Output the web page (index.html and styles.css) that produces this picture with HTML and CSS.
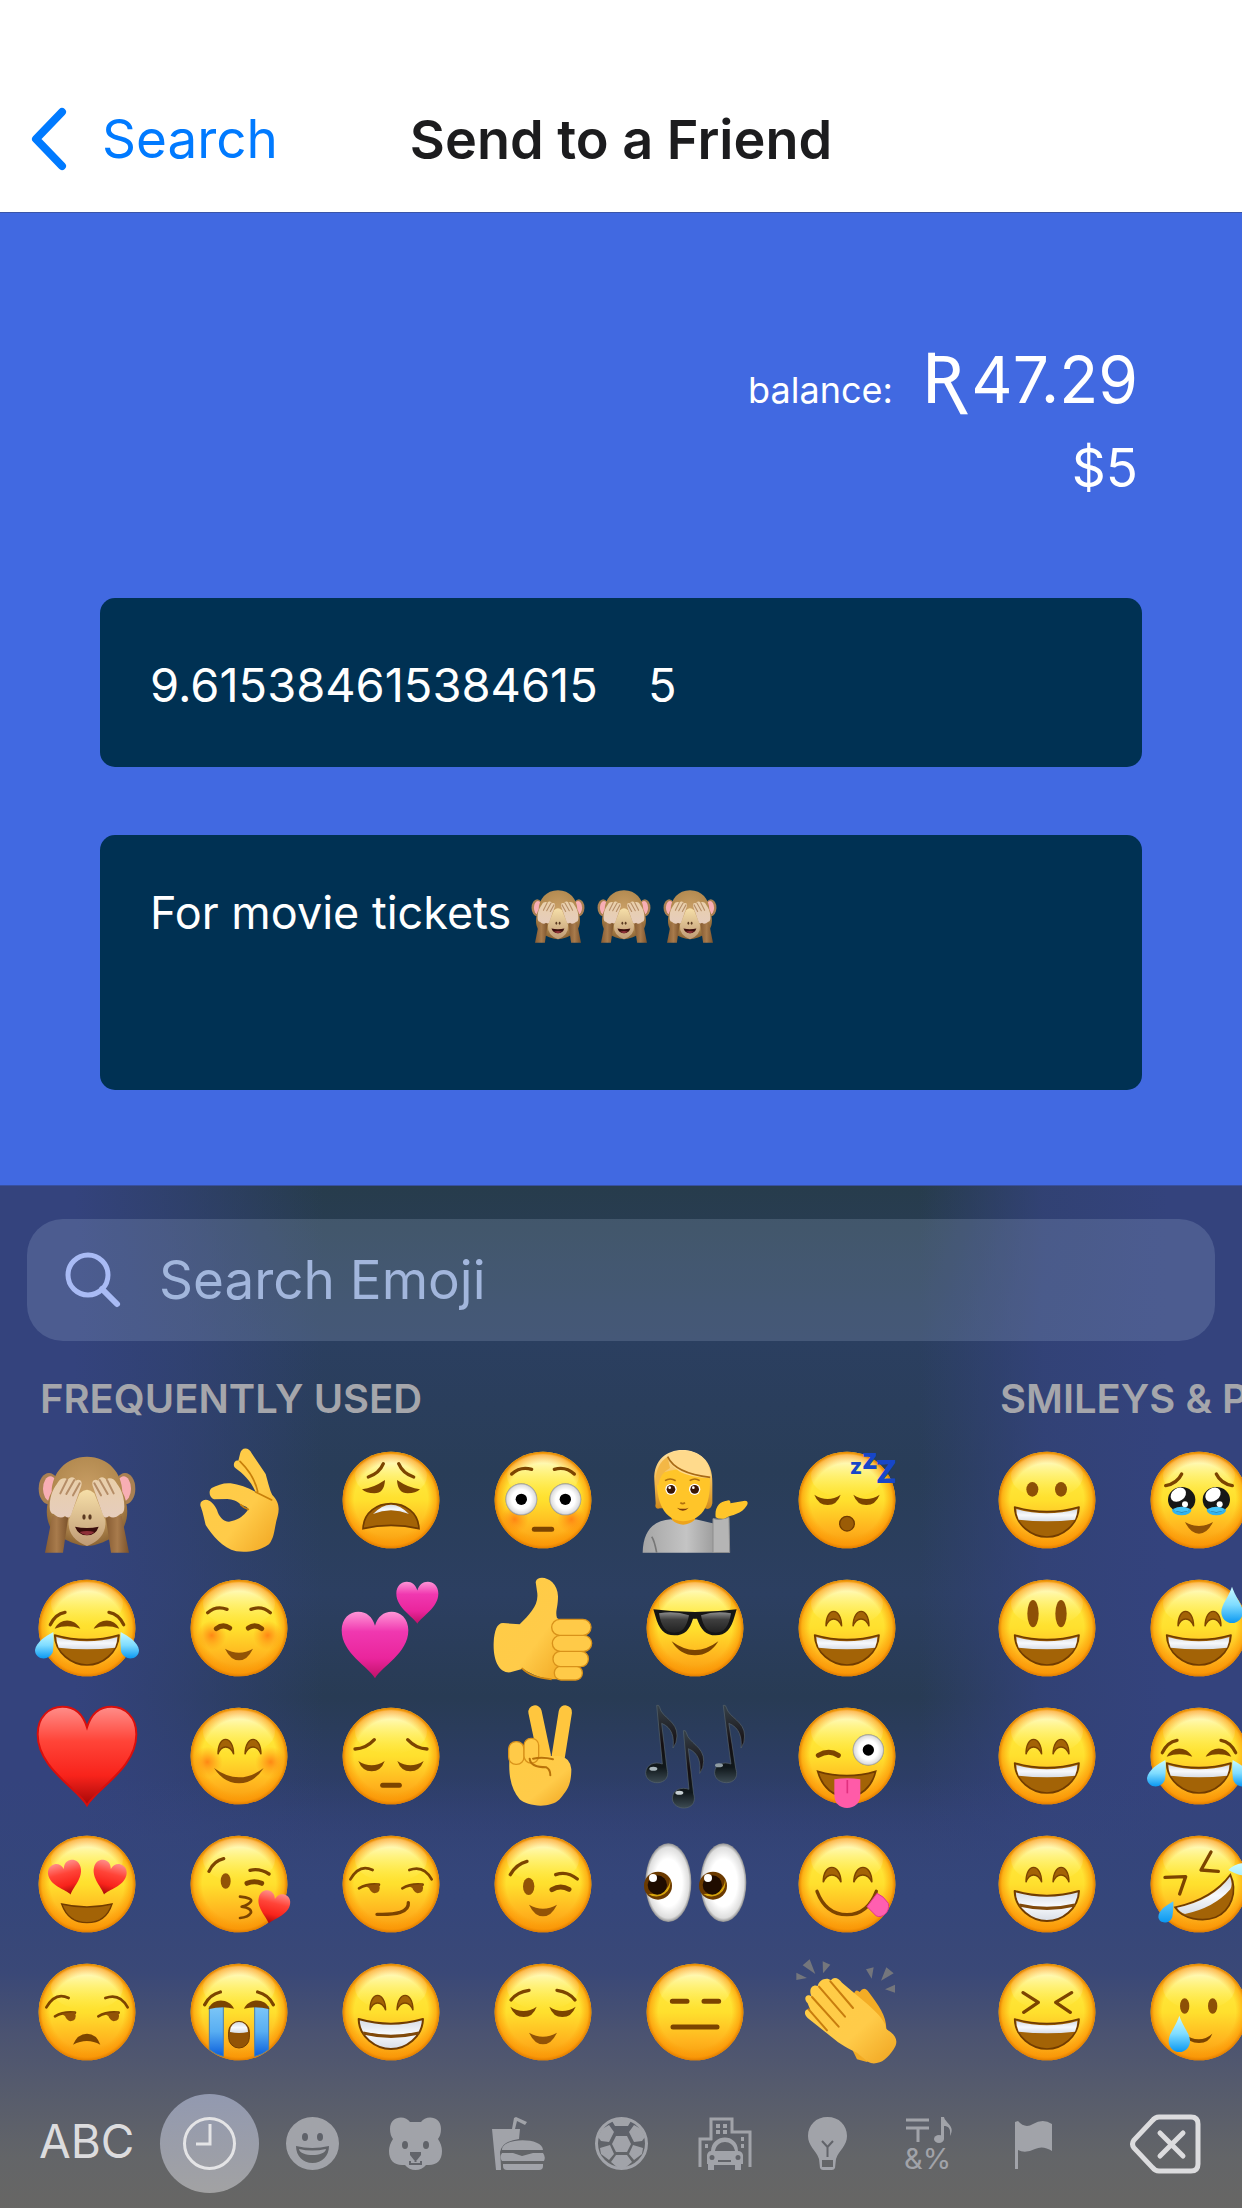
FILE: index.html
```html
<!DOCTYPE html>
<html lang="en">
<head>
<meta charset="utf-8">
<meta name="viewport" content="width=device-width, initial-scale=1">
<title>Send to a Friend</title>
<link rel="stylesheet" href="styles.css">
</head>
<body>
<svg class="sprite" width="0" height="0" aria-hidden="true">
  <defs>
    <linearGradient id="gFace" x1="0" y1="0" x2="0" y2="1">
      <stop offset="0" stop-color="#fff04a"/><stop offset=".5" stop-color="#ffe02e"/><stop offset=".8" stop-color="#ffb41e"/><stop offset="1" stop-color="#f79a0c"/>
    </linearGradient>
    <radialGradient id="gRim" cx=".5" cy=".5" r=".5">
      <stop offset=".76" stop-color="#ff9a00" stop-opacity="0"/><stop offset=".93" stop-color="#fb9404" stop-opacity=".6"/><stop offset="1" stop-color="#e07c00"/>
    </radialGradient>
    <linearGradient id="gShine" x1="0" y1="0" x2="0" y2="1">
      <stop offset="0" stop-color="#fffef0" stop-opacity=".95"/><stop offset="1" stop-color="#fff566" stop-opacity="0"/>
    </linearGradient>
    <radialGradient id="gCheek"><stop offset="0" stop-color="#ff7a10" stop-opacity=".85"/><stop offset="1" stop-color="#ff9010" stop-opacity="0"/></radialGradient>
    <linearGradient id="gTeeth" x1="0" y1="0" x2="0" y2="1"><stop offset="0" stop-color="#d5dae3"/><stop offset=".5" stop-color="#f7f9fc"/><stop offset="1" stop-color="#d8dde6"/></linearGradient>
    <linearGradient id="gTear" x1="0" y1="0" x2="0" y2="1"><stop offset="0" stop-color="#c9fbff"/><stop offset=".5" stop-color="#7fdcff"/><stop offset="1" stop-color="#0a98f2"/></linearGradient>
    <linearGradient id="gStream" x1="0" y1="0" x2="0" y2="1"><stop offset="0" stop-color="#7cc6f7"/><stop offset=".5" stop-color="#58aef2"/><stop offset="1" stop-color="#0b5fdc"/></linearGradient>
    <linearGradient id="gRed" x1="0" y1="0" x2="0" y2="1"><stop offset="0" stop-color="#ff8e8a"/><stop offset=".35" stop-color="#ff4438"/><stop offset=".7" stop-color="#f8231b"/><stop offset="1" stop-color="#a50808"/></linearGradient>
    <linearGradient id="gPink" x1="0" y1="0" x2="0" y2="1"><stop offset="0" stop-color="#ff96d6"/><stop offset=".3" stop-color="#f038b0"/><stop offset=".7" stop-color="#ea259c"/><stop offset="1" stop-color="#c01268"/></linearGradient>
    <linearGradient id="gHand" x1="0" y1="0" x2="1" y2="1"><stop offset="0" stop-color="#ffcc45"/><stop offset=".6" stop-color="#ffcb49"/><stop offset="1" stop-color="#f0a420"/></linearGradient>
    <radialGradient id="gEye"><stop offset=".6" stop-color="#ffffff"/><stop offset=".9" stop-color="#dedede"/><stop offset="1" stop-color="#8f8f8f"/></radialGradient>
    <radialGradient id="gFur" cx=".5" cy=".4" r=".6"><stop offset="0" stop-color="#caa067"/><stop offset=".7" stop-color="#b38a50"/><stop offset="1" stop-color="#8c6434"/></radialGradient>
    <linearGradient id="gArm" x1="0" y1="0" x2="1" y2="0"><stop offset="0" stop-color="#865b32"/><stop offset=".5" stop-color="#a87b4c"/><stop offset="1" stop-color="#7b522b"/></linearGradient>
    <linearGradient id="gMuzzle" x1="0" y1="0" x2="0" y2="1"><stop offset="0" stop-color="#f6dfa8"/><stop offset="1" stop-color="#bf9a75"/></linearGradient>
    <linearGradient id="gPaw" x1="0" y1="0" x2="0" y2="1"><stop offset="0" stop-color="#e9cfa9"/><stop offset="1" stop-color="#e6cdbd"/></linearGradient>
    <linearGradient id="gShirt" x1="0" y1="0" x2="1" y2="0"><stop offset="0" stop-color="#a5a5a5"/><stop offset=".6" stop-color="#c4c4c4"/><stop offset="1" stop-color="#9b9b9b"/></linearGradient>
    <linearGradient id="gHair" x1="0" y1="0" x2="0" y2="1"><stop offset="0" stop-color="#ffe2a3"/><stop offset=".5" stop-color="#f4bd55"/><stop offset="1" stop-color="#d08a1c"/></linearGradient>
    <linearGradient id="gNote" x1="0" y1="0" x2="0" y2="1"><stop offset="0" stop-color="#37424a"/><stop offset=".5" stop-color="#150f12"/><stop offset=".8" stop-color="#10181c"/><stop offset="1" stop-color="#3d4b53"/></linearGradient>
    <linearGradient id="gLens" x1="0" y1="0" x2="0" y2="1"><stop offset="0" stop-color="#8b8b8b"/><stop offset=".35" stop-color="#3f3f3f"/><stop offset="1" stop-color="#222"/></linearGradient>

    <g id="face">
      <circle r="145" fill="url(#gFace)"/><ellipse cy="-72" rx="108" ry="66" fill="url(#gShine)"/><circle r="145" fill="url(#gRim)"/>
    </g>
    <g id="happyEyes" fill="#a36306" stroke="#7c4400" stroke-width="4">
      <path d="M-63-5C-64-65-17-65-16-5Q-24-27-40-27T-63-5Z"/><path d="M18-5C19-65 66-65 66-5Q58-27 42-27T18-5Z"/>
    </g>
    <g id="openMouth">
      <path d="M-97 21Q0 49 96 21C94 75 45 111 0 111S-96 75-97 21Z" fill="#a36306" stroke="#713c00" stroke-width="5" stroke-linejoin="round"/>
      <path d="M-92 27Q0 53 91 27Q91 44 84 59Q0 69-85 59Q-92 44-92 27Z" fill="url(#gTeeth)"/>
    </g>
    <g id="teethMouth">
      <path d="M-97 21Q0 49 96 21C94 75 45 111 0 111S-96 75-97 21Z" fill="url(#gTeeth)" stroke="#713c00" stroke-width="6" stroke-linejoin="round"/>
      <path d="M-84 63Q0 83 84 63" fill="none" stroke="#80490a" stroke-width="10"/>
    </g>
    <g id="closedEyes" fill="#7c4400"><path d="M-98-16Q-58 10-19-16Q-30 15-58 15T-98-16Z"/><path d="M19-16Q58 10 98-16Q86 15 58 15T19-16Z"/></g>
    <path id="smallSmile" d="M-42 62Q0 86 42 62Q25 97 0 97T-42 62Z" fill="#925306"/>
    <path id="heart" d="M0 100C-20 65-100 25-100-44C-100-80-76-100-50-100C-25-100-8-85 0-58C8-85 25-100 50-100C76-100 100-80 100-44C100 25 20 65 0 100Z"/>
    <path id="drop" d="M0-55C12-20 32-2 32 22A32 32 0 0 1-32 22C-32-2-12-20 0-55Z" fill="url(#gTear)"/>
    <g id="sideEyes"><g class="ink thin"><path d="M-122-14Q-95-62-55-42M55-42Q98-58 122-14M-96 13Q-70-2-36 2M34 13Q60-2 95 2"/></g><g fill="#925306"><path d="M-78 5L-36 0Q-28 26-50 28Q-62 24-66 12Z"/><path d="M52 5L94 0Q102 26 80 28Q68 24 64 12Z"/></g></g>
  </defs>

  <symbol id="monkey" viewBox="-159 -159 318 318">
    <ellipse cx="-114" cy="-34" rx="31" ry="47" fill="#a98052"/><ellipse cx="114" cy="-34" rx="31" ry="47" fill="#a98052"/>
    <ellipse cx="-110" cy="-34" rx="22" ry="37" fill="#f8aeb4"/><ellipse cx="110" cy="-34" rx="22" ry="37" fill="#f8aeb4"/>
    <path d="M0-130C65-130 105-80 106-25C130 20 128 90 75 115C50 125 30 138 0 138S-50 125-75 115C-128 90-130 20-106-25C-105-80-65-130 0-130Z" fill="url(#gFur)"/>
    <path d="M-22-20Q0-42 22-20L55 60Q60 115 0 138Q-60 115-55 60Z" fill="url(#gMuzzle)"/>
    <ellipse cx="-9" cy="51" rx="5" ry="8" fill="#5b3a22"/><ellipse cx="9" cy="51" rx="5" ry="8" fill="#5b3a22"/>
    <path d="M-36 80Q0 88 35 80Q26 106 0 106T-36 80Z" fill="#3a0d0c"/><path d="M-22 96Q0 90 22 96Q12 106 0 106T-22 96Z" fill="#8e3038"/>
    <path d="M-104 48L-56 50L-72 158H-126Z" fill="url(#gArm)"/><path d="M104 48L56 50L72 158H126Z" fill="url(#gArm)"/>
    <g id="paw"><path d="M-112 20C-112-20-96-40-88-52C-80-68-62-68-58-60C-50-74-34-68-34-58C-20-66-12-54-18-40L-46 40Q-52 60-66 48Q-80 60-100 42Q-112 40-112 20Z" fill="url(#gPaw)"/><path d="M-80-20L-60-60M-62-18L-38-60M-42-14L-22-50" fill="none" stroke="#b58d67" stroke-width="6" stroke-linecap="round"/></g>
    <use href="#paw" transform="scale(-1 1)"/>
  </symbol>
  <symbol id="okhand" viewBox="-159 -159 318 318">
    <path d="M3-138C6-160 30-160 38-140L80-78C88-50 92-30 100-15C120 5 122 25 116 48C106 80 108 110 90 133C60 155 20 158-8 154C-50 145-80 105-100 75C-106 50-108 40-114 22C-120 8-112 0-100-1C-85 0-72 15-66 30C-60 50-48 65-30 65C-5 60 10 50 20 38C35 25 25 20 5 14C-5 2-20-2-35-3L-75-2C-90-8-92-28-82-36C-65-45-45-52-25-50C0-46 25-38 50-24C34-60 10-80-10-95C-22-105-12-122-2-118Z" fill="url(#gHand)"/>
    <path d="M3-116Q45-75 56-26M28 28Q15 25 5 14M50-24L98 0" fill="none" stroke="#c87f0a" stroke-width="5" stroke-linecap="round"/>
  </symbol>
  <symbol id="weary" viewBox="-159 -159 318 318"><use href="#face"/>
    <path class="ink" d="M-68-69Q-35-80-23-109M68-69Q35-80 23-109"/>
    <g fill="#7c4400"><path d="M-87-32Q-55-35-18-60Q-20-20-50-20Q-75-20-87-32Z"/><path d="M87-32Q55-35 18-60Q20-20 50-20Q75-20 87-32Z"/></g>
    <path d="M-84 86C-80-14 80-14 84 86Q0 66-84 86Z" fill="#a36306" stroke="#713c00" stroke-width="5"/><path d="M-54 42Q0-14 54 42Q0 20-54 42Z" fill="url(#gTeeth)"/>
  </symbol>
  <symbol id="flushed" viewBox="-159 -159 318 318"><use href="#face"/>
    <circle cx="-85" cy="58" r="42" fill="url(#gCheek)"/><circle cx="85" cy="58" r="42" fill="url(#gCheek)"/>
    <circle cx="-65" cy="-2" r="48" fill="url(#gEye)"/><circle cx="67" cy="-2" r="48" fill="url(#gEye)"/><circle cx="-65" cy="-2" r="17"/><circle cx="67" cy="-2" r="17"/>
    <path class="ink" d="M-94-78Q-68-102-34-92M94-78Q68-102 34-92"/><path class="ink fat" d="M-26 88H26"/>
  </symbol>
  <symbol id="tipping" viewBox="-159 -159 318 318">
    <path d="M-122-60C-125-120-85-150-38-150S55-120 52-50V10Q48 32 30 25H-105Q-122 30-118 10Z" fill="url(#gHair)"/>
    <path d="M-70 30H0V66Q-35 90-70 66Z" fill="#eda41c"/>
    <path d="M-157 158C-155 90-125 62-72 58Q-36 90 2 58L62 72V158Z" fill="url(#gShirt)"/>
    <path d="M-115 158Q-122 120-130 110" stroke="#777" stroke-width="5" fill="none"/>
    <path d="M54 56Q78 62 102 52L104 158H54Z" fill="#b5b5b5" stroke="#8d8d8d" stroke-width="3"/>
    <path d="M62 52C58 20 75 4 95 2Q108-2 106 10L150 2Q162 2 156 16C140 44 110 44 92 54Q76 60 62 52Z" fill="#ffc52a"/>
    <path d="M-114-75Q-38-110 44-75C47-20 44 60-36 64C-106 60-118-20-114-75Z" fill="#ffc529"/>
    <path d="M-80-135Q-75-70 48-65Q45-135-20-148Q-65-152-80-135Z" fill="#ffda8c"/><path d="M-82-130Q-118-110-120-45L-110-45Q-105-80-75-96Z" fill="#f3b746"/><path d="M-82-130Q-60-80 46-68" fill="none" stroke="#a86a16" stroke-width="5"/>
    <circle cx="-72" cy="-32" r="17" fill="#fff"/><circle cx="-1" cy="-32" r="17" fill="#fff"/><circle cx="-72" cy="-32" r="13" fill="#3b1605"/><circle cx="-1" cy="-32" r="13" fill="#3b1605"/><circle cx="-76" cy="-37" r="4" fill="#fff"/><circle cx="-5" cy="-37" r="4" fill="#fff"/>
    <path d="M-90-58Q-75-68-58-58M-16-58Q0-68 14-58M-44 8Q-37 14-30 8" fill="none" stroke="#b0700e" stroke-width="5"/><path d="M-54 23Q-36 30-19 23Q-36 42-54 23Z" fill="#7c3a0c"/>
  </symbol>
  <symbol id="joy" viewBox="-159 -159 318 318"><use href="#face"/><use href="#openMouth"/>
    <path class="ink" d="M-110-10Q-95-42-66-47M110-10Q95-42 66-47"/>
    <g fill="#7c4400"><path d="M-97 2C-80-32-38-30-20 2Q-58-12-97 2Z"/><path d="M97 2C80-32 38-30 20 2Q58-12 97 2Z"/></g>
    <path id="tearSide" d="M-101 12C-125 25-152 42-156 66C-156 98-110 100-102 70Q-98 40-101 12Z" fill="url(#gTear)"/><use href="#tearSide" transform="scale(-1 1)"/>
  </symbol>
  <symbol id="relaxed" viewBox="-159 -159 318 318"><use href="#face"/>
    <circle cx="-82" cy="22" r="44" fill="url(#gCheek)"/><circle cx="86" cy="22" r="44" fill="url(#gCheek)"/>
    <path class="ink" d="M-94-46Q-68-68-36-56M94-46Q68-68 36-56"/><path class="ink fat" d="M-68 2Q-48-14-28 0M68 2Q48-14 28 0"/><use href="#smallSmile"/>
  </symbol>
  <symbol id="hearts" viewBox="-159 -159 318 318"><use href="#heart" transform="translate(-48 51)" fill="url(#gPink)"/><use href="#heart" transform="translate(79 -76) scale(.63)" fill="url(#gPink)"/></symbol>
  <symbol id="thumb" viewBox="-159 -159 318 318">
    <path d="M-22-138C-16-164 44-150 45-95C45-60 36-50 42-30L80-10V150C30 160-20 150-60 122L-98 133C-130 136-150 100-148 45C-146 8-138-15-120-15L-70-11C-40-42-10-70-18-110Z" fill="url(#gHand)"/>
    <g fill="#ffca48" stroke="#d9921a" stroke-width="4"><rect x="34" y="114" width="84" height="42" rx="20"/><rect x="30" y="70" width="106" height="46" rx="22"/><rect x="28" y="22" width="118" height="48" rx="24"/><rect x="26" y="-26" width="118" height="48" rx="24"/></g>
    <path d="M-64 120Q-36 150 26 154" fill="none" stroke="#d28912" stroke-width="5"/>
  </symbol>
  <symbol id="shades" viewBox="-159 -159 318 318"><use href="#face"/>
    <path d="M-125-56Q0-40 125-56L119-36C108 5 92 22 62 22C32 22 18 5 6-28H-6C-16 5-30 22-62 22C-92 22-108 5-119-36Z" fill="#151515"/>
    <path d="M-108-44Q-60-52-18-38C-25 0-40 14-62 14C-88 14-102-5-108-44ZM108-44Q60-52 18-38C25 0 40 14 62 14C88 14 102-5 108-44Z" fill="url(#gLens)"/>
    <path d="M-70 40Q0 92 70 40Q45 82 0 82T-70 40Z" fill="#7c4400"/>
  </symbol>
  <symbol id="smile" viewBox="-159 -159 318 318"><use href="#face"/><use href="#happyEyes"/><use href="#openMouth"/></symbol>
  <symbol id="redheart" viewBox="-159 -159 318 318"><use href="#heart" transform="scale(1.48)" fill="url(#gRed)" stroke="#d90f0c" stroke-width="4"/></symbol>
  <symbol id="blush" viewBox="-159 -159 318 318"><use href="#face"/>
    <circle cx="-95" cy="18" r="46" fill="url(#gCheek)"/><circle cx="95" cy="18" r="46" fill="url(#gCheek)"/><use href="#happyEyes"/>
    <path d="M-75 36Q0 92 74 36Q45 82 0 82T-75 36Z" fill="#8a4d04"/>
  </symbol>
  <symbol id="pensive" viewBox="-159 -159 318 318"><use href="#face"/><path class="ink" d="M-108-21Q-75-22-50-49M108-21Q75-22 50-49"/><use href="#closedEyes" y="31"/><path class="ink fat" d="M-25 88H25"/></symbol>
  <symbol id="victory" viewBox="-159 -159 318 318">
    <path d="M-24-132L4 0M67-132L46 0" stroke="#ffc63e" stroke-width="40" stroke-linecap="round"/>
    <path d="M-100 0C-105 60-95 100-70 130C-50 150 20 160 50 130C70 105 85 90 85 40Q82 5 50 0Z" fill="url(#gHand)"/>
    <rect x="-103" y="-43" width="46" height="68" rx="22" fill="#ffca48" stroke="#d9921a" stroke-width="4"/><rect x="-57" y="-53" width="44" height="74" rx="21" fill="#ffca48" stroke="#d9921a" stroke-width="4"/>
    <path d="M-40 8Q-38 34 10 34Q22 40 22 58M30 10Q0 2-30 8" fill="none" stroke="#b9720a" stroke-width="6" stroke-linecap="round"/>
  </symbol>
  <symbol id="notes" viewBox="-159 -159 318 318">
    <g fill="url(#gNote)" stroke="#56636b" stroke-width="2">
      <g id="note"><path d="M-115-152Q-108-155-106-146C-100-115-52-105-54-60Q-54-40-66-24C-62-55-68-85-100-98L-84 38C-68 92-148 92-148 50C-146 24-120 16-98 24Z"/></g>
      <use href="#note" transform="translate(80 76)"/><use href="#note" transform="translate(205 0) skewX(2)"/>
    </g>
    <ellipse cx="-125" cy="38" rx="12" ry="6" fill="#a7b4ba"/><ellipse cx="-47" cy="110" rx="12" ry="6" fill="#c5ced2"/><ellipse cx="72" cy="28" rx="12" ry="6" fill="#8e9ba2"/>
  </symbol>
  <symbol id="tongue" viewBox="-159 -159 318 318"><use href="#face"/>
    <path class="ink fat" d="M-86-2Q-54-20-26-2"/><circle cx="64" cy="-18" r="47" fill="url(#gEye)"/><circle cx="64" cy="-18" r="17"/>
    <path d="M-88 46Q0 72 86 46C74 96 40 122 0 122S-74 96-88 46Z" fill="#a36306" stroke="#713c00" stroke-width="5"/>
    <path d="M-38 70Q0 64 40 70V118C40 142 22 156 0 156S-38 142-38 118Z" fill="#ff5ba8"/><path d="M1 72V112" stroke="#e0307f" stroke-width="5"/>
  </symbol>
  <symbol id="hearteyes" viewBox="-159 -159 318 318"><use href="#face"/>
    <use href="#heart" transform="translate(-62 -17) rotate(-15) scale(.5)" fill="url(#gRed)"/><use href="#heart" transform="translate(64 -17) rotate(15) scale(.5)" fill="url(#gRed)"/>
    <path d="M-76 60Q0 78 75 60C62 100 32 116 0 116S-62 100-76 60Z" fill="#a36306" stroke="#713c00" stroke-width="4"/>
  </symbol>
  <symbol id="kiss" viewBox="-159 -159 318 318"><use href="#face"/>
    <ellipse cx="-40" cy="-9" rx="15" ry="23" fill="#925306"/><path class="ink" d="M-90-38Q-75-70-46-76M33-41Q62-48 90-30"/><path class="ink fat" d="M24-2Q46-12 68-2"/>
    <path class="ink thin" d="M3 38Q40 42 36 52Q30 62 8 68Q38 72 36 86Q28 100 3 102"/>
    <use href="#heart" transform="translate(101 72) rotate(14) scale(.48)" fill="url(#gRed)"/>
  </symbol>
  <symbol id="smirk" viewBox="-159 -159 318 318"><use href="#face"/><use href="#sideEyes"/><path class="ink" d="M-42 91C15 93 55 85 52 56"/></symbol>
  <symbol id="wink" viewBox="-159 -159 318 318"><use href="#face"/>
    <ellipse cx="-43" cy="7" rx="17" ry="26" fill="#925306"/><path class="ink" d="M-98-28Q-80-60-48-68M38-28Q72-40 103-15"/><path class="ink fat" d="M27 17Q52 2 78 16"/><use href="#smallSmile"/>
  </symbol>
  <symbol id="eyes" viewBox="-159 -159 318 318">
    <g id="oneEye"><ellipse cx="-80" cy="-4" rx="69" ry="118" fill="url(#gEye)"/><circle cx="-111" cy="5" r="42" fill="#6b3a00"/><path d="M-140 30A42 42 0 0 0-75-15Q-75 30-140 30Z" fill="#d6a40c"/><circle cx="-113" cy="3" r="29" fill="#1f0c00"/><circle cx="-126" cy="-18" r="12" fill="#fff"/></g>
    <use href="#oneEye" x="165"/>
  </symbol>
  <symbol id="yum" viewBox="-159 -159 318 318"><use href="#face"/><use href="#happyEyes" transform="scale(1.13 1)"/>
    <path class="ink" d="M-90 22C-72 70-40 92 0 92S70 70 88 22"/><path d="M60 68L90 28Q110 36 124 58C130 84 106 104 88 96Z" fill="#ff5fb0" stroke="#e0388c" stroke-width="3"/>
  </symbol>
  <symbol id="unamused" viewBox="-159 -159 318 318"><use href="#face"/><use href="#sideEyes"/><path d="M-42 98Q-28 65 0 65T40 98Q0 76-42 98Z" fill="#7c4400"/></symbol>
  <symbol id="sob" viewBox="-159 -159 318 318"><use href="#face"/>
    <path d="M-89-16H-47V133Q-70 128-89 112ZM89-16H47V133Q70 128 89 112Z" fill="url(#gStream)" stroke="#4a7fae" stroke-width="3"/>
    <g fill="#7c4400"><path d="M-92-8C-78-46-28-40-15-10Q-50-20-92-8Z"/><path d="M92-8C78-46 28-40 15-10Q50-20 92-8Z"/></g><path class="ink" d="M-103-22Q-88-52-56-60M103-22Q88-52 56-60"/>
    <rect x="-31" y="28" width="62" height="80" rx="31" fill="#925306" stroke="#713c00" stroke-width="3"/><path d="M-27 60C-27 20 27 20 27 60Q0 66-27 60Z" fill="url(#gTeeth)"/>
  </symbol>
  <symbol id="beam" viewBox="-159 -159 318 318"><use href="#face"/><use href="#happyEyes"/><use href="#teethMouth"/></symbol>
  <symbol id="relieved" viewBox="-159 -159 318 318"><use href="#face"/><path class="ink" d="M-96-36Q-78-60-42-65M96-36Q78-60 42-65"/><use href="#closedEyes"/><use href="#smallSmile"/></symbol>
  <symbol id="blank" viewBox="-159 -159 318 318"><use href="#face"/><path class="ink fat" d="M-68-32H-24M27-32H71M-66 45H66"/></symbol>
  <symbol id="clap" viewBox="-159 -159 318 318">
    <g fill="#74767c"><path d="M-133-140L-112-158L-95-114ZM-73-152L-50-142L-72-116ZM-152-118L-120-102L-152-96ZM57-128L80-134L74-100ZM118-134L140-116L102-94ZM114-68L144-82V-58Z"/></g>
    <path d="M20-52Q26-72 38-60Q50-78 62-64C95-20 118 10 118 50L146 84L60 150L30 142L-20 40Z" fill="#f3ac25"/>
    <path d="M-48-95C-38-108-25-100-15-88L60-25C100 10 115 30 118 52C150 70 155 90 140 112C120 140 105 156 75 154C60 150 50 138 30 122C0 108-15 100-35 84L-118 18C-135 2-122-14-110-6L-118-26C-134-42-120-58-106-46C-118-72-100-84-88-78C-84-98-60-106-48-95Z" fill="url(#gHand)"/>
    <path d="M-50-92L18-12M-84-76L-6 14M-105-45L-25 44M-115-8L-60 55" fill="none" stroke="#c87d0e" stroke-width="6" stroke-linecap="round"/>
  </symbol>
  <symbol id="grin" viewBox="-159 -159 318 318"><use href="#face"/><ellipse cx="-44" cy="-32" rx="18" ry="22" fill="#8d5006"/><ellipse cx="42" cy="-32" rx="18" ry="22" fill="#8d5006"/><use href="#openMouth"/></symbol>
  <symbol id="holdtears" viewBox="-159 -159 318 318"><use href="#face"/>
    <ellipse cx="-52" cy="30" rx="29" ry="16" fill="#2fb3f2"/><ellipse cx="52" cy="30" rx="29" ry="16" fill="#2fb3f2"/><ellipse cx="-52" cy="-1" rx="41" ry="38" fill="#171717"/><ellipse cx="52" cy="-1" rx="41" ry="38" fill="#171717"/>
    <path d="M-78 27Q-52 14-26 27Q-30 36-52 36T-78 27ZM78 27Q52 14 26 27Q30 36 52 36T78 27Z" fill="#45c3f8"/>
    <ellipse cx="-62" cy="-16" rx="25" ry="19" transform="rotate(-35 -62 -16)" fill="#fff"/><ellipse cx="42" cy="-16" rx="25" ry="19" transform="rotate(-35 42 -16)" fill="#fff"/><circle cx="-42" cy="13" r="9" fill="#fff"/><circle cx="62" cy="13" r="9" fill="#fff"/>
    <path class="ink" d="M-100-43Q-65-50-52-78M100-43Q65-50 52-78"/><use href="#smallSmile" y="4"/>
  </symbol>
  <symbol id="smiley" viewBox="-159 -159 318 318"><use href="#face"/><ellipse cx="-42" cy="-43" rx="17" ry="41" fill="#8d5006"/><ellipse cx="42" cy="-43" rx="17" ry="41" fill="#8d5006"/><use href="#openMouth"/></symbol>
  <symbol id="sweat" viewBox="-159 -159 318 318"><use href="#face"/><use href="#happyEyes"/><use href="#openMouth"/><use href="#drop" x="99" y="-69"/></symbol>
  <symbol id="rofl" viewBox="-159 -159 318 318"><use href="#face"/>
    <path d="M-72 70Q40 45 94-28C118 25 95 80 50 100C10 115-50 105-72 70Z" fill="#a36306" stroke="#713c00" stroke-width="5"/><path d="M-66 71Q42 48 93-22Q102 0 94 16Q45 72-42 90Q-58 84-66 71Z" fill="url(#gTeeth)"/>
    <path class="ink" d="M-102-20L-40-22L-58 30M36-96L6-42L58-38"/>
    <path d="M-77 52C-100 65-122 80-122 100C-118 122-86 120-80 98Q-76 76-77 52ZM88-42C105-60 140-72 158-52C160-20 130-18 88-42Z" fill="url(#gTear)"/>
  </symbol>
  <symbol id="laugh" viewBox="-159 -159 318 318"><use href="#face"/><path class="ink" d="M-72-58L-26-29L-70 1M74-58L26-29L70 1"/><use href="#openMouth"/></symbol>
  <symbol id="tearsmile" viewBox="-159 -159 318 318"><use href="#face"/><ellipse cx="-43" cy="-18" rx="14" ry="23" fill="#8d5006"/><ellipse cx="41" cy="-18" rx="14" ry="23" fill="#8d5006"/>
    <path d="M-50 62Q0 100 40 65Q30 93 0 93T-50 62Z" fill="#7c4400"/><use href="#drop" x="-59" y="66"/></symbol>
</svg>

<header class="navbar">
  <a class="back" href="#search">
    <svg class="chevron" viewBox="0 0 38 64" aria-hidden="true"><path d="M32 5L6 32L32 59" fill="none" stroke="currentColor" stroke-width="8" stroke-linecap="round" stroke-linejoin="round"/></svg>
    <span>Search</span>
  </a>
  <h1 class="title">Send to a Friend</h1>
</header>

<main class="transfer">
  <section class="balance">
    <p class="balance-row"><span class="balance-label">balance:</span><span class="balance-amount">Ʀ47.29</span></p>
    <p class="balance-usd">$5</p>
  </section>
  <form class="fields">
    <div class="field amount">
      <input class="amount-coin" type="text" value="9.615384615384615" aria-label="Amount">
      <input class="amount-usd" type="text" value="5" aria-label="Amount in dollars">
    </div>
    <div class="field memo">
      <textarea class="memo-text" rows="2" aria-label="Note">For movie tickets</textarea>
      <svg class="memo-emoji"><use href="#monkey"/></svg>
      <svg class="memo-emoji"><use href="#monkey"/></svg>
      <svg class="memo-emoji"><use href="#monkey"/></svg>
    </div>
  </form>
</main>

<section class="keyboard" aria-label="Emoji keyboard">
  <label class="search">
    <svg class="search-icon" viewBox="0 0 56 56" aria-hidden="true"><circle cx="23" cy="23" r="20" fill="none" stroke="currentColor" stroke-width="5"/><path d="M37 37L52 52" stroke="currentColor" stroke-width="6" stroke-linecap="round"/></svg>
    <input class="search-input" type="text" placeholder="Search Emoji" aria-label="Search Emoji">
  </label>
  <div class="groups">
    <section class="group">
      <h2 class="group-title">FREQUENTLY USED</h2>
      <div class="grid">
        <button class="key" aria-label="see no evil"><svg><use href="#monkey"/></svg></button>
        <button class="key" aria-label="OK hand"><svg><use href="#okhand"/></svg></button>
        <button class="key" aria-label="weary"><svg><use href="#weary"/></svg></button>
        <button class="key" aria-label="flushed"><svg><use href="#flushed"/></svg></button>
        <button class="key" aria-label="tipping hand"><svg><use href="#tipping"/></svg></button>
        <button class="key" aria-label="sleeping"><svg viewBox="-159 -159 318 318"><use href="#face"/><use href="#closedEyes"/><circle cy="71" r="22" fill="#9b5c06" stroke="#713c00" stroke-width="4"/><g class="zzz"><text x="8" y="-77" font-size="64">z</text><text x="44" y="-92" font-size="84">z</text><text x="86" y="-52" font-size="94">Z</text></g></svg></button>
        <button class="key" aria-label="tears of joy"><svg><use href="#joy"/></svg></button>
        <button class="key" aria-label="relaxed"><svg><use href="#relaxed"/></svg></button>
        <button class="key" aria-label="two hearts"><svg><use href="#hearts"/></svg></button>
        <button class="key" aria-label="thumbs up"><svg><use href="#thumb"/></svg></button>
        <button class="key" aria-label="sunglasses"><svg><use href="#shades"/></svg></button>
        <button class="key" aria-label="smile"><svg><use href="#smile"/></svg></button>
        <button class="key" aria-label="red heart"><svg><use href="#redheart"/></svg></button>
        <button class="key" aria-label="blush"><svg><use href="#blush"/></svg></button>
        <button class="key" aria-label="pensive"><svg><use href="#pensive"/></svg></button>
        <button class="key" aria-label="victory"><svg><use href="#victory"/></svg></button>
        <button class="key" aria-label="notes"><svg><use href="#notes"/></svg></button>
        <button class="key" aria-label="winking with tongue"><svg><use href="#tongue"/></svg></button>
        <button class="key" aria-label="heart eyes"><svg><use href="#hearteyes"/></svg></button>
        <button class="key" aria-label="blowing a kiss"><svg><use href="#kiss"/></svg></button>
        <button class="key" aria-label="smirk"><svg><use href="#smirk"/></svg></button>
        <button class="key" aria-label="wink"><svg><use href="#wink"/></svg></button>
        <button class="key" aria-label="eyes"><svg><use href="#eyes"/></svg></button>
        <button class="key" aria-label="yum"><svg><use href="#yum"/></svg></button>
        <button class="key" aria-label="unamused"><svg><use href="#unamused"/></svg></button>
        <button class="key" aria-label="sob"><svg><use href="#sob"/></svg></button>
        <button class="key" aria-label="beaming"><svg><use href="#beam"/></svg></button>
        <button class="key" aria-label="relieved"><svg><use href="#relieved"/></svg></button>
        <button class="key" aria-label="expressionless"><svg><use href="#blank"/></svg></button>
        <button class="key" aria-label="clap"><svg><use href="#clap"/></svg></button>
      </div>
    </section>
    <section class="group">
      <h2 class="group-title">SMILEYS &amp; PEOPLE</h2>
      <div class="grid pair">
        <button class="key" aria-label="grinning"><svg><use href="#grin"/></svg></button>
        <button class="key" aria-label="holding back tears"><svg><use href="#holdtears"/></svg></button>
        <button class="key" aria-label="smiley"><svg><use href="#smiley"/></svg></button>
        <button class="key" aria-label="sweat smile"><svg><use href="#sweat"/></svg></button>
        <button class="key" aria-label="smile"><svg><use href="#smile"/></svg></button>
        <button class="key" aria-label="tears of joy"><svg><use href="#joy"/></svg></button>
        <button class="key" aria-label="beaming"><svg><use href="#beam"/></svg></button>
        <button class="key" aria-label="rolling on the floor"><svg><use href="#rofl"/></svg></button>
        <button class="key" aria-label="laughing"><svg><use href="#laugh"/></svg></button>
        <button class="key" aria-label="smiling with tear"><svg><use href="#tearsmile"/></svg></button>
      </div>
    </section>
  </div>
  <nav class="toolbar">
    <button class="abc">ABC</button>
    <div class="tabs">
      <button class="tab active" aria-label="Recent"><svg viewBox="0 0 53 53"><circle cx="26.500" cy="26.500" r="25" fill="none" stroke="currentColor" stroke-width="3"/><path d="M27 7V27H13" fill="none" stroke="currentColor" stroke-width="3"/></svg></button>
      <button class="tab" aria-label="Smileys"><svg viewBox="0 0 53 53"><path fill="currentColor" fill-rule="evenodd" d="M26.500 0A26.500 26.500 0 1 1 26.500 53A26.500 26.500 0 0 1 26.500 0ZM19 16A3 4 0 1 0 19 24A3 4 0 0 0 19 16ZM34 16A3 4 0 1 0 34 24A3 4 0 0 0 34 16ZM10 29Q26 33 43 29C43 39 36 46 26.500 46S10 39 10 29ZM13 32C14 40 39 40 40 32Q26 35 13 32Z"/></svg></button>
      <button class="tab" aria-label="Animals"><svg viewBox="0 0 53 53"><path fill="currentColor" fill-rule="evenodd" d="M21 5H32C36-2 52-2 52 12Q52 18 49 22Q53 28 53 34C53 43 48 48 40 48H37Q33 53 26.500 53T16 48H13C5 48 0 43 0 34Q0 28 4 22Q1 18 1 12C1-2 17-2 21 5ZM16 24A3 4 0 1 0 16 32A3 4 0 0 0 16 24ZM37 24A3 4 0 1 0 37 32A3 4 0 0 0 37 24Z"/><path d="M21 35H32V38L28 43H25L21 38ZM25.500 42H27.500V45H25.500Z" class="cut"/><path d="M21 44V47H32V44" class="cutline"/></svg></button>
      <button class="tab" aria-label="Food"><svg viewBox="0 0 53 53"><path fill="currentColor" d="M0 12H20L22 1L24 0L35 5L33 8L25 4L23 12H28L27 22Q10 24 8 35Q9 47 9 53H4Z"/><path fill="currentColor" d="M10 33C10 20 51 20 51 33ZM10 36H21L30 39L41 36H51Q54 40 52 44H10Q7 40 10 36ZM11 47H51V49Q51 53 47 53H15Q11 53 11 49Z"/></svg></button>
      <button class="tab" aria-label="Activity"><svg viewBox="0 0 53 53"><circle cx="26.500" cy="26.500" r="25" fill="none" stroke="currentColor" stroke-width="3"/><g fill="currentColor"><path d="M21 19H32L36 27L32 35H21L17 27Z"/><path d="M17 4Q26 0 36 4L33 9H20ZM7 12L14 8L19 15L14 25L6 24L3 20ZM46 12L39 8L34 15L39 25L47 24L50 20ZM15 28L19 37L14 43L6 37L5 31ZM38 28L34 37L39 43L47 37L48 31ZM21 38H32L37 45L30 51H23L16 45Z"/></g></svg></button>
      <button class="tab" aria-label="Travel"><svg viewBox="0 0 53 53"><path d="M2 50V22H13V2H34V15H52V50" fill="none" stroke="currentColor" stroke-width="3"/><path fill="currentColor" d="M18 7H22V11H18ZM25 7H29V11H25ZM18 13H22V17H18ZM25 13H29V17H25ZM7 27H10V31H7ZM43 20H46V24H43ZM43 27H46V31H43Z"/><path class="gap" d="M9 53V35L15 23H39L44 35V53Z"/><path fill="currentColor" fill-rule="evenodd" d="M9 38Q10 34 13 34C14 16 40 16 40 34Q44 34 45 38V47H43V53H37V48H16V53H10V47H9ZM17 34H37C35 22 19 22 17 34ZM14 38A2 2 0 1 0 14 43A2 2 0 0 0 14 38ZM40 38A2 2 0 1 0 40 43A2 2 0 0 0 40 38ZM20 43V45H33V43Z"/></svg></button>
      <button class="tab" aria-label="Objects"><svg viewBox="0 0 53 53"><path fill="currentColor" fill-rule="evenodd" d="M26.500 0C38 0 46 8 46 19C46 29 38 33 35 42L34 51Q33 53 31 53H22Q20 53 19 51L18 42C15 33 7 29 7 19C7 8 15 0 26.500 0ZM21 43V50H32V43Z"/><path class="cutline" d="M26.500 40V30L21 24M26.500 30L32 24"/></svg></button>
      <button class="tab" aria-label="Symbols"><svg viewBox="0 0 53 53"><path d="M2 3H25M2 11H25M14 11V25" fill="none" stroke="currentColor" stroke-width="3"/><ellipse cx="35" cy="22" rx="5" ry="4" fill="currentColor"/><path fill="currentColor" d="M37 0H40C41 6 52 9 46 19C47 11 44 9 40 9V22H37Z"/><text x="0" y="52" class="symbols-text">&amp;%</text></svg></button>
      <button class="tab" aria-label="Flags"><svg viewBox="0 0 53 53"><path fill="currentColor" d="M8 5L11 4Q18 12 26 7Q36 1 45 7V34Q36 28 28 32Q18 37 11 33V52H8Z"/></svg></button>
    </div>
    <button class="delete" aria-label="Delete"><svg viewBox="0 0 72 60"><path d="M30 3H62Q69 3 69 10V50Q69 57 62 57H30Q26 57 23 53L5 34Q2 30 5 26L23 7Q26 3 30 3Z" fill="none" stroke="currentColor" stroke-width="5"/><path d="M31 19L54 42M54 19L31 42" stroke="currentColor" stroke-width="5" stroke-linecap="round"/></svg></button>
  </nav>
</section>
</body>
</html>
```
FILE: styles.css
```css
* { box-sizing: border-box; }

body {
  margin: 0;
  min-height: 100vh;
  display: flex;
  flex-direction: column;
  overflow-x: hidden;
  background: #4169e1;
  font-family: Inter, "Liberation Sans", sans-serif;
}

h1, h2, p { margin: 0; font-weight: 400; }

button, input, textarea {
  margin: 0;
  padding: 0;
  border: 0;
  outline: 0;
  background: none;
  color: inherit;
  font: inherit;
}

svg { display: block; overflow: visible; }
.sprite { position: absolute; }

/* Shared line styles of the emoji drawings */
.ink { fill: none; stroke: #7c4400; stroke-width: 10px; stroke-linecap: round; stroke-linejoin: round; }
.ink.thin, .thin .ink { stroke-width: 8px; }
.ink.fat { stroke-width: 15px; }
.zzz { fill: #1746c8; font-weight: 800; }

/* Navigation bar */
.navbar {
  display: grid;
  grid-template-columns: 1fr auto 1fr;
  align-items: center;
  height: 213px;
  padding: 66px 30px 0;
  background: #fff;
  border-bottom: 1px solid #3a55a8;
}
.back {
  display: flex;
  align-items: center;
  gap: 34px;
  color: #007aff;
  font-size: 53px;
  text-decoration: none;
}
.chevron { width: 38px; height: 64px; }
.title { color: #1c1c1e; font-size: 54px; font-weight: 600; }

/* Transfer form */
.transfer {
  flex: 1;
  padding: 132px 100px 94px;
  color: #fff;
}
.balance {
  padding-right: 4px;
  text-align: right;
}
.balance-row {
  display: flex;
  justify-content: flex-end;
  align-items: baseline;
  gap: 32px;
  line-height: 70px;
}
.balance-label { font-size: 36px; }
.balance-amount { font-size: 64px; }
.balance-usd { margin-top: 5px; font-size: 53px; line-height: 76px; }

.fields {
  display: flex;
  flex-direction: column;
  gap: 68px;
  margin-top: 92px;
}
.field {
  display: flex;
  padding: 50px;
  border-radius: 15px;
  background: #003153;
}
.amount {
  align-items: center;
  gap: 50px;
  height: 169px;
  padding-bottom: 46px;
  font-size: 47px;
}
.amount-coin { width: 448px; }
.amount-usd { flex: 1; min-width: 0; }
.memo { gap: 8px; padding-bottom: 35px; font-size: 45px; }
.memo-text {
  width: 371px;
  height: 170px;
  line-height: 56px;
  resize: none;
  overflow: hidden;
  white-space: nowrap;
}
.memo-emoji { width: 58px; height: 58px; }

/* Emoji keyboard */
.keyboard {
  overflow: hidden;
  padding: 33px 0 15px;
  border-top: 1px solid #3850a0;
  background:
    linear-gradient(to bottom, rgba(54, 71, 121, 0) 58%, #35467a 70%, #3a4877 77%, #4b5371 83%, #575c6c 89%, #636568 95%, #676664 100%),
    linear-gradient(to right, #34437d 6%, rgba(52, 67, 125, 0.600) 15%, rgba(52, 67, 125, 0) 26%, rgba(52, 67, 125, 0) 74%, rgba(52, 67, 125, 0.800) 84%, #34437d 94%),
    linear-gradient(to bottom, #273c4c 0%, #2b3f60 15%, #293d58 28%, #2c3f61 40%, #283b54 50%, #303f70 62%, #35467a 70%);
}
.search {
  display: flex;
  align-items: center;
  gap: 38px;
  height: 122px;
  margin: 0 27px;
  padding: 0 38px;
  border-radius: 36px;
  background: rgba(205, 225, 250, 0.160);
}
.search-icon { width: 56px; height: 56px; color: #a9bbf5; }
.search-input { flex: 1; min-width: 0; font-size: 53px; color: #a2b6dc; }
.search-input::placeholder { color: #a2b6dc; opacity: 1; }

.groups {
  display: flex;
  gap: 94px;
  margin-top: 34px;
  padding-left: 34px;
}
.group { flex: none; }
.group-title {
  padding-left: 6px;
  color: #a5a6ab;
  font-size: 40px;
  font-weight: 600;
  line-height: 48px;
  white-space: nowrap;
}
.grid {
  display: grid;
  grid-template-columns: repeat(6, 106px);
  gap: 22px 46px;
  margin-top: 24px;
}
.pair { grid-template-columns: repeat(2, 106px); }
.key, .key svg { width: 106px; height: 106px; }

.toolbar {
  display: flex;
  align-items: center;
  margin-top: 29px;
  padding: 0 41px 0 39px;
  color: #dcdcde;
}
.abc { width: 94px; padding-bottom: 5px; font-size: 46px; text-align: left; }
.tabs {
  flex: 1;
  display: flex;
  justify-content: space-between;
  margin: 0 46px 0 27px;
}
.tab {
  display: grid;
  place-items: center;
  width: 99px;
  height: 99px;
  border-radius: 50%;
  color: #a1a3a9;
}
.tab svg { width: 53px; height: 53px; }
.active { background: linear-gradient(#9299b0, #a2a2a3); color: #e4e4e6; }
.cut, .gap { fill: #62646a; }
.cutline { fill: none; stroke: #62646a; stroke-width: 2px; }
.symbols-text { fill: currentColor; font-size: 29px; }
.delete svg { width: 72px; height: 60px; }
```
